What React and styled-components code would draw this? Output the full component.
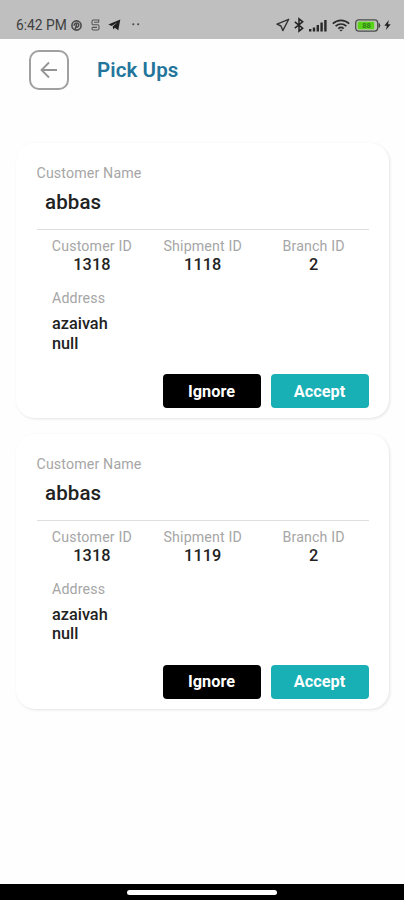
import styled, { createGlobalStyle } from "styled-components"

const GlobalStyle = createGlobalStyle`
  * {
    box-sizing: border-box;
  }

  body {
    margin: 0;
    background: #fefefe;
    font-family: Roboto, "Liberation Sans", sans-serif;
  }
`

const Screen = styled.div`
  width: 404px;
  height: 900px;
  display: flex;
  flex-direction: column;
  overflow: hidden;
  background: #fefefe;
`

const StatusBar = styled.div`
  height: 39px;
  flex-shrink: 0;
  display: flex;
  justify-content: space-between;
  padding: 15px 13.5px 0 16px;
  background: #bfbfbf;
  color: #404040;
`

const StatusGroup = styled.div`
  display: flex;
  align-items: center;
  height: 20px;
`

const Clock = styled.span`
  width: 55px;
  font-size: 13.8px;
  line-height: 20px;
  white-space: nowrap;
`

const StatusIcon = styled.svg`
  display: block;
  flex-shrink: 0;
  margin-left: ${(props) => props.$gap || 0}px;
  overflow: visible;
`

const Header = styled.header`
  display: flex;
  align-items: center;
  gap: 28px;
  height: 61px;
  flex-shrink: 0;
  padding: 0 29px;
`

const BackButton = styled.button`
  width: 40px;
  height: 40px;
  display: flex;
  align-items: center;
  justify-content: center;
  padding: 0;
  background: transparent;
  border: 2px solid #a0a0a0;
  border-radius: 10px;
  color: #949494;
`

const Title = styled.h1`
  margin: 0;
  font-size: 20.5px;
  font-weight: 600;
  line-height: 24px;
  letter-spacing: 0.1px;
  color: #23759b;
`

const List = styled.main`
  flex: 1;
  display: flex;
  flex-direction: column;
  gap: 15.5px;
  padding: 43px 15px 0 15.5px;
`

const Card = styled.article`
  height: 275px;
  padding: 21px 20px 0 21px;
  background: #fff;
  border-radius: 19px;
  box-shadow: 1px 1px 3px rgba(0, 0, 0, 0.11);
`

const Label = styled.div`
  font-size: 14.2px;
  line-height: 18px;
  letter-spacing: 0.15px;
  color: #a6a6a6;
`

const CustomerName = styled.div`
  padding: 8px 0 0 8.5px;
  height: 42px;
  font-size: 20.5px;
  font-weight: 500;
  line-height: 24px;
  letter-spacing: 0.1px;
  color: #222;
`

const Ids = styled.div`
  display: grid;
  grid-template-columns: repeat(3, 1fr);
  padding-top: 7px;
  border-top: 1px solid #dedede;
  margin-top: 5px;
  text-align: center;
`

const IdValue = styled.div`
  padding-top: 1px;
  font-size: 16.3px;
  font-weight: 500;
  line-height: 18px;
  letter-spacing: 0.1px;
  color: #222;
`

const Address = styled.div`
  padding: 15px 15.5px 0;
`

const AddressLine = styled.div`
  font-size: 16.3px;
  font-weight: 500;
  line-height: 19.5px;
  color: #222;

  ${Label} + & {
    margin-top: 7px;
  }
`

const Actions = styled.div`
  display: flex;
  justify-content: flex-end;
  gap: 10px;
  margin-top: 21px;
`

const Button = styled.button`
  width: 98px;
  height: 34px;
  padding: 0 1px 0 0;
  border: none;
  border-radius: 4px;
  background: ${(props) => (props.$primary ? "#18afb5" : "#000")};
  color: #fff;
  font-family: inherit;
  font-size: 16.3px;
  font-weight: 700;
`

const NavBar = styled.div`
  height: 16px;
  flex-shrink: 0;
  display: flex;
  justify-content: center;
  padding-top: 6px;
  background: #000;
`

const HomeIndicator = styled.div`
  width: 150px;
  height: 5px;
  border-radius: 3px;
  background: #fff;
`

const pickUps = [
  { customer: "abbas", customerId: "1318", shipmentId: "1118", branchId: "2", address: ["azaivah", "null"] },
  { customer: "abbas", customerId: "1318", shipmentId: "1119", branchId: "2", address: ["azaivah", "null"] },
]

function NotificationIcons() {
  return (
    <>
      <StatusIcon width="11" height="11" viewBox="0 0 11 11" fill="none">
        <circle cx="5.5" cy="5.5" r="4.6" stroke="#4a4a4a" strokeWidth="1.6" />
        <path d="M4 9.8 5.7 4M3.3 5.8C2.4 2.7 8.2 2 7.8 5.2 7.5 7.4 5.6 7.5 5.1 6.5" stroke="#4a4a4a" strokeWidth="1.5" />
      </StatusIcon>
      <StatusIcon $gap={9} width="9" height="12" viewBox="0 0 9 12" fill="none" stroke="#555" strokeWidth="1.1">
        <path d="M7.8 2.8V1H2.4Q1 1 1 2.4v2Q1 5.8 2.4 5.8h4.2Q8 5.8 8 7.2v2.4Q8 11 6.6 11H2.4Q1 11 1 9.6V8.8M3 3.3h5M1 8.4h5" />
      </StatusIcon>
      <StatusIcon $gap={8} width="13" height="12" viewBox="0 0 13 12" fill="#202020">
        <path d="M.3 5.6 12.3.4 10.3 11.2 6.8 8.8 5.3 10.6 4.7 7.6 9.5 3.2 3.7 7z" />
      </StatusIcon>
      <StatusIcon $gap={10} width="9" height="12" viewBox="0 0 9 12" fill="#444">
        <circle cx="2.3" cy="5.2" r="1" />
        <circle cx="7.2" cy="5.2" r="1" />
      </StatusIcon>
    </>
  )
}

function SystemIcons() {
  return (
    <>
      <StatusIcon width="14" height="14" viewBox="0 0 14 14" fill="none" stroke="#333" strokeWidth="1.4">
        <path d="M12.7 1.3 1 6.2 5 8 6.8 12.6z" strokeLinejoin="round" />
      </StatusIcon>
      <StatusIcon $gap={4} width="10" height="14" viewBox="0 0 10 14" fill="none" stroke="#222" strokeWidth="1.5">
        <path d="M.8 3.8 8.7 10.2 5 13.2V.8L8.7 3.8.8 10.2" />
      </StatusIcon>
      <StatusIcon $gap={5} width="18" height="13" viewBox="0 0 18 13" fill="#292929">
        <rect x="0" y="10" width="2.4" height="2.5" />
        <rect x="3.8" y="8.5" width="2.4" height="4" />
        <rect x="7.6" y="6" width="2.4" height="6.5" />
        <rect x="11.4" y="3.5" width="2.4" height="9" />
        <rect x="15.2" y="1" width="2.4" height="11.5" />
      </StatusIcon>
      <StatusIcon $gap={5} width="18" height="13" viewBox="0 0 18 13" fill="none" stroke="#2b2b2b" strokeWidth="1.7">
        <path d="M.8 4.6C5.5.2 12.5.2 17.2 4.6M3.6 7.2c3.2-2.9 7.6-2.9 10.8 0M6.3 9.6c1.6-1.4 3.8-1.4 5.4 0" />
        <path d="m7.2 10.8 1.8 1.8 1.8-1.8z" fill="#2b2b2b" stroke="none" />
      </StatusIcon>
      <StatusIcon $gap={5} width="26" height="13" viewBox="0 0 26 13">
        <rect x=".7" y=".9" width="22" height="11.2" rx="3" fill="#bfc8b8" stroke="#4b4b4b" strokeWidth="1.3" />
        <rect x="2.7" y="2.8" width="16.5" height="7.4" rx="1" fill="#59d318" />
        <path d="M24 4.5Q26 6.5 24 8.5z" fill="#444" stroke="#444" />
        <text
          x="11.5"
          y="9.2"
          textAnchor="middle"
          fontFamily="Roboto, sans-serif"
          fontSize="7.5"
          fontWeight="700"
          fill="#2f7d18"
        >
          88
        </text>
      </StatusIcon>
      <StatusIcon $gap={3} width="7" height="10" viewBox="0 0 7 10" fill="#222">
        <path d="M4.8 0 .3 5.7h2.6L2 10 6.7 4.2H4z" />
      </StatusIcon>
    </>
  )
}

function PickUpCard({ item }) {
  return (
    <Card>
      <Label>Customer Name</Label>
      <CustomerName>{item.customer}</CustomerName>
      <Ids>
        <div>
          <Label>Customer ID</Label>
          <IdValue>{item.customerId}</IdValue>
        </div>
        <div>
          <Label>Shipment ID</Label>
          <IdValue>{item.shipmentId}</IdValue>
        </div>
        <div>
          <Label>Branch ID</Label>
          <IdValue>{item.branchId}</IdValue>
        </div>
      </Ids>
      <Address>
        <Label>Address</Label>
        {item.address.map((line) => (
          <AddressLine key={line}>{line}</AddressLine>
        ))}
      </Address>
      <Actions>
        <Button type="button">Ignore</Button>
        <Button type="button" $primary>
          Accept
        </Button>
      </Actions>
    </Card>
  )
}

function App() {
  return (
    <>
      <GlobalStyle />
      <Screen>
        <StatusBar>
          <StatusGroup>
            <Clock>6:42 PM</Clock>
            <NotificationIcons />
          </StatusGroup>
          <StatusGroup>
            <SystemIcons />
          </StatusGroup>
        </StatusBar>
        <Header>
          <BackButton type="button" aria-label="Back">
            <svg width="18" height="18" viewBox="0 0 18 18" fill="none" stroke="currentColor" strokeWidth="1.8">
              <path d="M17 9H2M9 1.5 1.5 9 9 16.5" />
            </svg>
          </BackButton>
          <Title>Pick Ups</Title>
        </Header>
        <List>
          {pickUps.map((item) => (
            <PickUpCard key={item.shipmentId} item={item} />
          ))}
        </List>
        <NavBar>
          <HomeIndicator />
        </NavBar>
      </Screen>
    </>
  )
}

export default App
